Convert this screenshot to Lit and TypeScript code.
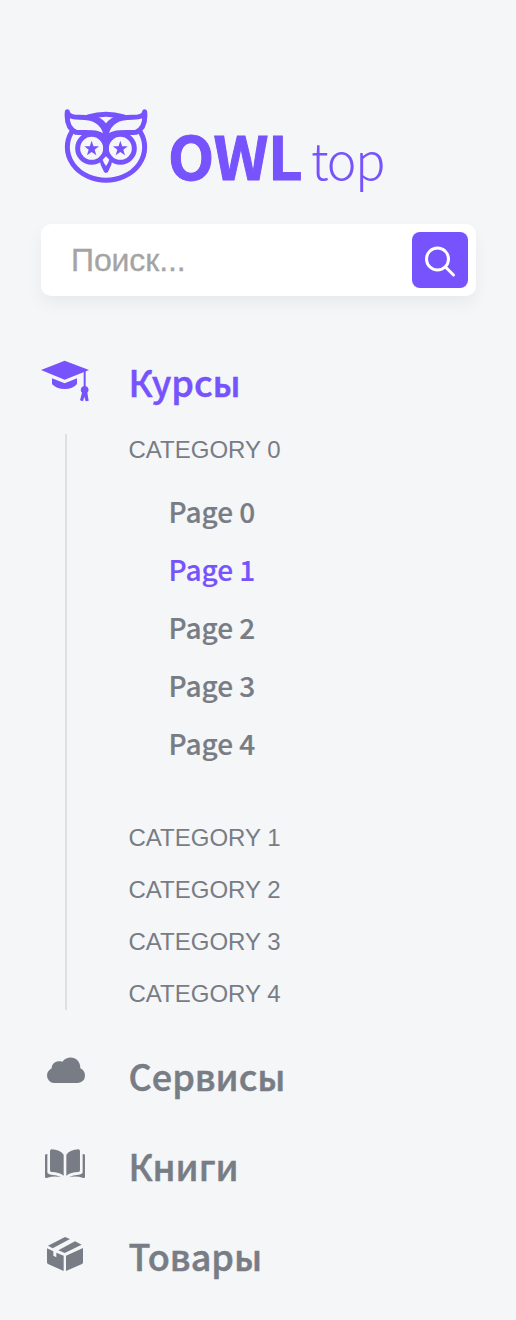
import { LitElement, html, css, svg } from "lit";
import { customElement, state } from "lit/decorators.js";

interface Section {
  name: string;
  icon: unknown;
}

const hat = svg`<svg class="icon hat" viewBox="0 0 144 126">
  <path d="M0 30 71 2 144 30 71 59Z"/>
  <path d="M33 55 71 70 108 55V72Q96 87 71 87T33 72Z"/>
  <path d="M128 30H134V78A12 12 0 0 1 139 98L143 122 134 124 130 110 126 124 117 121 123 98A12 12 0 0 1 128 78Z"/>
</svg>`;

const cloud = svg`<svg class="icon cloud" viewBox="0 0 114 78">
  <path d="M21 78A22 22 0 0 1 0 56Q0 42 14 34C14 17 31 9 46 14C64-9 101 0 100 34Q114 41 114 56A21 22 0 0 1 93 78Z"/>
</svg>`;

const book = svg`<svg class="icon book" viewBox="0 0 120 88">
  <path d="M15 6Q15 1 20 1Q44 2 56 17V80Q42 69 20 69Q15 69 15 64Z"/>
  <path d="M105 6Q105 1 100 1Q76 2 64 17V80Q78 69 100 69Q105 69 105 64Z"/>
  <path d="M0 19Q0 15 7 15V70Q8 76 18 77Q36 77 49 85Q27 80 5 87Q0 88 0 83Z"/>
  <path d="M120 19Q120 15 113 15V70Q112 76 102 77Q84 77 71 85Q93 80 115 87Q120 88 120 83Z"/>
</svg>`;

const box = svg`<svg class="icon box" viewBox="0 0 108 102">
  <path d="M3 26 54 0 69 6 17 34Z"/>
  <path d="M34 40 84 13 104 23 53 48Z"/>
  <path d="M0 34 19 43V56L28 61V47L50 56V102L3 81Q0 80 0 76Z"/>
  <path d="M108 33V76Q108 80 105 81L57 102V56Z"/>
</svg>`;

const owl = svg`<svg class="owl" viewBox="0 0 252 225">
  <g fill="none" stroke="currentColor" stroke-width="15" stroke-linecap="round" stroke-linejoin="round">
    <path d="M23 72A116 99 0 1 0 229 72"/>
    <path d="M73 27Q126 11 179 27"/>
    <path d="M10 11C11 24 22 28 46 28C88 28 118 40 126 80C134 40 164 28 206 28C230 28 241 24 242 11C245 42 239 63 216 73C184 76 140 66 126 96C112 66 68 76 36 73C13 63 7 42 10 11"/>
    <path d="M94 31Q116 41 126 60Q136 41 158 31"/>
    <circle cx="83" cy="121" r="42"/>
    <circle cx="169" cy="121" r="42"/>
    <path d="M113 151Q116 170 126 187Q136 170 139 151Z" fill="currentColor"/>
    <path d="M126 90V140"/>
  </g>
  <path class="beak" d="M126 145 136 155Q133 165 126 174Q119 165 116 155Z"/>
  <path d="M83 98 88.500 114.500H105L92 125 97 141.500 83 132 69 141.500 74 125 61 114.500H77.500Z"/>
  <path d="M169 98 174.500 114.500H191L178 125 183 141.500 169 132 155 141.500 160 125 147 114.500H163.500Z"/>
</svg>`;

@customElement("app-root")
export class AppRoot extends LitElement {
  @state() private openCategory = 0;
  @state() private activePage = 1;

  static styles = css`
    :host {
      display: block;
      box-sizing: border-box;
      height: 1320px;
      padding: 108px 40px 0 41px;
      overflow: hidden;
      background: #f5f6f8;
      color: #787d85;
      font-family: "Noto Sans CJK KR", "Noto Sans", sans-serif;
    }
    svg { display: block; fill: currentColor; }
    .logo {
      display: flex;
      height: 116px;
      padding-left: 23px;
      color: #7653fc;
    }
    .owl { width: 84px; height: 75px; flex: none; }
    .beak { fill: #f5f6f8; }
    .brand {
      display: flex;
      gap: 9px;
      margin-left: 20px;
      padding-top: 6px;
      height: 80px;
      line-height: 80px;
      font-size: 60px;
      white-space: nowrap;
    }
    .brand b { font-weight: 700; letter-spacing: -0.5px; -webkit-text-stroke: 1px currentColor; }
    .brand span { font-weight: 300; font-size: 50px; line-height: 88px; letter-spacing: -1.2px; }
    .search {
      display: flex;
      align-items: center;
      justify-content: space-between;
      box-sizing: border-box;
      height: 72px;
      padding: 8px 8px 8px 30px;
      border-radius: 10px;
      background: #fff;
      box-shadow: 0 8px 16px rgba(0, 0, 0, 0.05);
      font: 32px/72px "Liberation Sans", Arial, sans-serif;
      color: #a4a4a4;
    }
    .hint { height: 72px; letter-spacing: -0.1px; -webkit-text-stroke: 0.3px currentColor; }
    .find {
      display: grid;
      place-items: center;
      width: 56px;
      height: 56px;
      padding: 0;
      border: 0;
      border-radius: 8px;
      background: #7653fc;
      color: #fff;
    }
    .find svg { width: 32px; height: 32px; overflow: visible; }
    .menu { padding-top: 56px; }
    .section {
      display: flex;
      height: 60px;
      margin-bottom: 30px;
      font-size: 36px;
      font-weight: 500;
      line-height: 58px;
      -webkit-text-stroke: 0.5px currentColor;
    }
    .slot { width: 87.5px; flex: none; padding-top: 8px; }
    .icon.hat { width: 48px; height: 42px; }
    .icon.cloud { width: 38px; height: 26px; margin: 3px 0 0 6px; }
    .icon.book { width: 40px; height: 29.3px; margin: 5px 0 0 4px; }
    .icon.box { width: 36px; height: 34px; margin: 3px 0 0 6px; }
    .section.active { color: #7653fc; margin-bottom: 22px; }
    .tree {
      margin: 0 0 36px 24px;
      padding-left: 61.5px;
      border-left: 2px solid #dfe0e2;
      height: 576px;
    }
    .category {
      height: 32px;
      margin-bottom: 20px;
      font: 24px/32px "Liberation Sans", Arial, sans-serif;
      text-transform: uppercase;
      cursor: pointer;
    }
    .pages { padding: 0 0 50px 40px; margin-top: -4px; }
    .page {
      height: 58px;
      font-size: 28px;
      font-weight: 500;
      line-height: 58px;
      -webkit-text-stroke: 0.2px currentColor;
    }
    .page.active { color: #7653fc; }
  `;

  private sections: Section[] = [
    { name: "Сервисы", icon: cloud },
    { name: "Книги", icon: book },
    { name: "Товары", icon: box },
  ];

  private renderCategory(i: number) {
    return html`
      <div class="category" @click=${() => (this.openCategory = i)}>Category ${i}</div>
      ${i === this.openCategory
        ? html`<div class="pages">
            ${[0, 1, 2, 3, 4].map(
              (p) => html`<div class="page ${p === this.activePage ? "active" : ""}"
                @click=${() => (this.activePage = p)}>Page ${p}</div>`
            )}
          </div>`
        : ""}
    `;
  }

  render() {
    return html`
      <div class="logo">${owl}<div class="brand"><b>OWL</b><span>top</span></div></div>
      <div class="search">
        <span class="hint">Поиск...</span>
        <button class="find" aria-label="Поиск">
          <svg viewBox="0 0 32 32">
            <g fill="none" stroke="#fff" stroke-width="3" stroke-linecap="round">
              <circle cx="13.5" cy="15" r="11"/>
              <path d="M21.5 23 29.5 31"/>
            </g>
          </svg>
        </button>
      </div>
      <div class="menu">
        <div class="section active"><div class="slot">${hat}</div>Курсы</div>
        <div class="tree">${[0, 1, 2, 3, 4].map((i) => this.renderCategory(i))}</div>
        ${this.sections.map(
          (s) => html`<div class="section"><div class="slot">${s.icon}</div>${s.name}</div>`
        )}
      </div>
    `;
  }
}
